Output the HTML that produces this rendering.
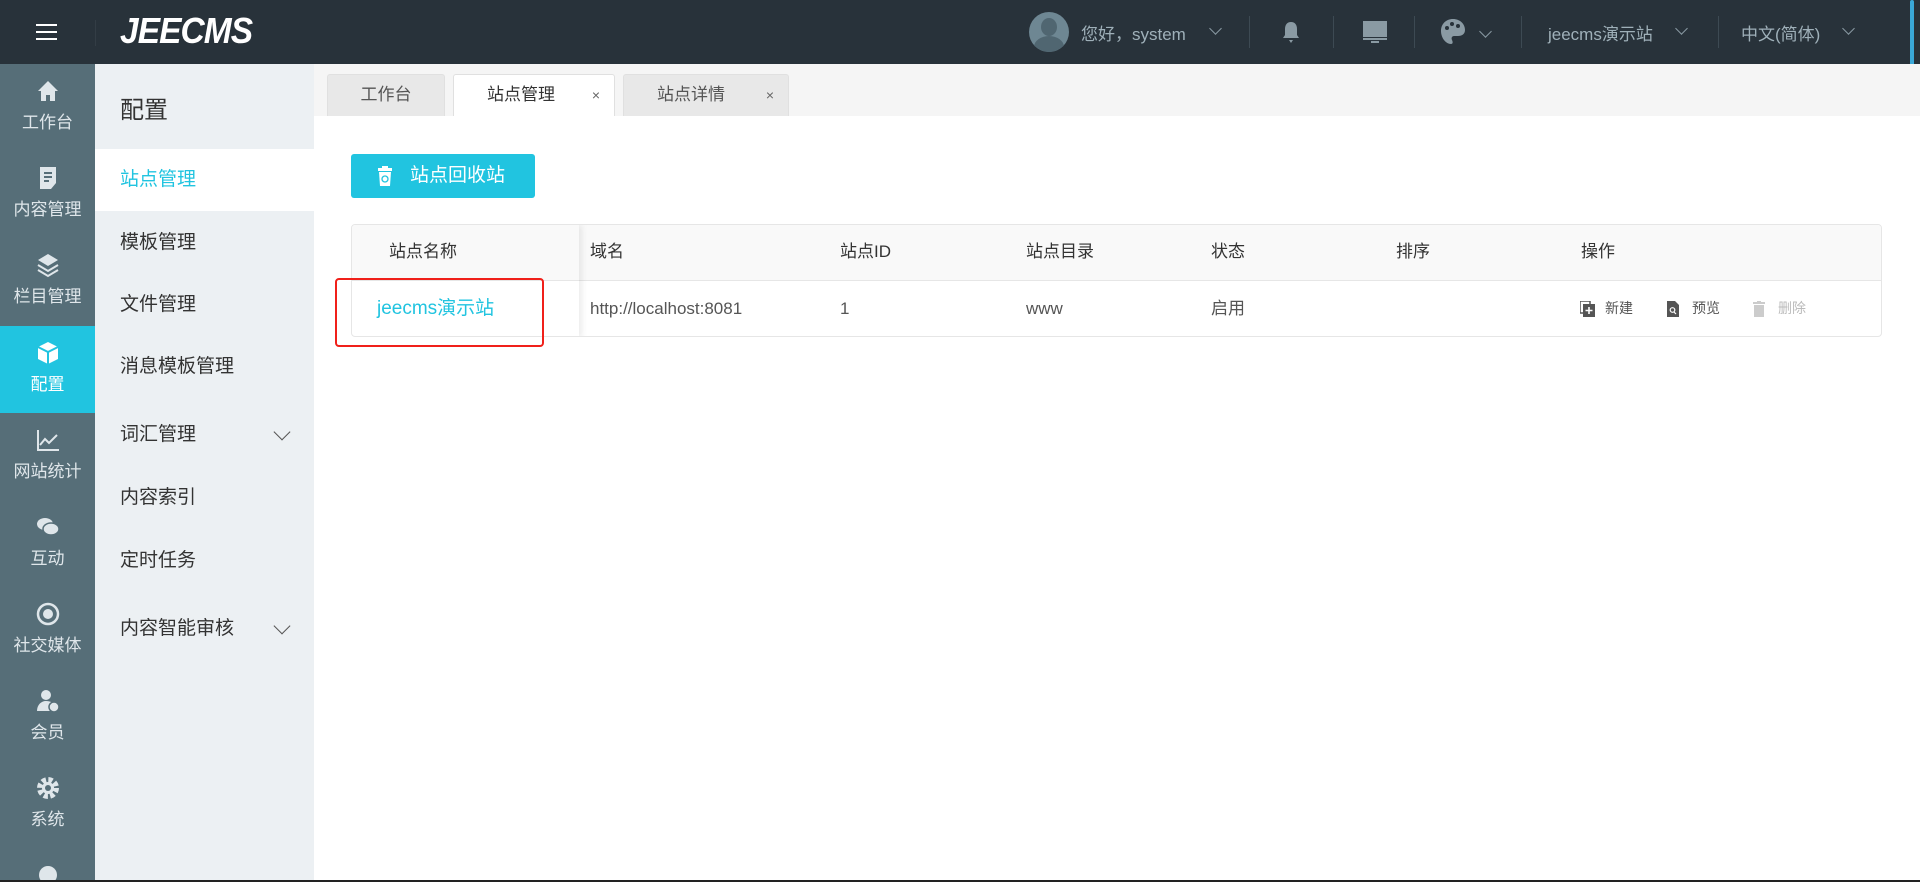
<!DOCTYPE html>
<html style="overflow:hidden;width:1920px;height:882px"><head><meta charset="utf-8"><style>
*{margin:0;padding:0;box-sizing:border-box}
body{width:1920px;height:882px;overflow:hidden;background:#fff;font-family:"Liberation Sans","Noto Sans CJK SC",sans-serif;position:relative}
.abs{position:absolute}
#hdr{left:0;top:0;width:1920px;height:64px;background:#28323a}
#nav{left:0;top:64px;width:95px;height:818px;background:#566e78;overflow:hidden}
.ni{position:absolute;left:0;width:95px;height:87px;color:#dfe6ea;text-align:center;font-size:17px}
.ni svg{display:block;margin:14px auto 4px;width:26px;height:26px}
.ni.act{background:#21c4e0;color:#fff}
#sub{left:95px;top:64px;width:219px;height:818px;background:#ecf0f3;overflow:hidden}
.si{position:absolute;left:0;width:219px;height:62px;line-height:62px;padding-left:25px;font-size:19px;color:#333}
.si.act{background:#fff;color:#21c4e0}
.chev{position:absolute;right:26px;top:22px;width:12px;height:12px;border-right:1.5px solid #555;border-bottom:1.5px solid #555;transform:rotate(45deg)}
.tab{position:absolute;top:74px;height:42px;line-height:40px;background:#e8e8e8;border:1px solid #e0e0e0;border-bottom:none;border-radius:3px 3px 0 0;font-size:17px;color:#555}
.tab .x{position:absolute;right:14px;top:0;font-size:14px;color:#666}
.th{position:absolute;top:224px;height:56px;line-height:56px;font-size:17px;color:#333}
.td{position:absolute;top:280px;height:57px;line-height:57px;font-size:17px;color:#555}
.hd{position:absolute;color:#9fb0b9;font-size:17px;top:20px}
.dv{position:absolute;top:16px;width:1px;height:32px;background:#3d4a53}
.hc{position:absolute;top:24px;width:9px;height:9px;border-right:1.5px solid #8a9aa3;border-bottom:1.5px solid #8a9aa3;transform:rotate(45deg)}
</style></head><body>
<div id="hdr" class="abs">
 <div class="abs" style="left:36px;top:24px;width:21px;height:2px;background:#fff;box-shadow:0 7px 0 #fff,0 14px 0 #fff"></div>
 <div class="abs" style="left:95px;top:20px;width:1px;height:26px;background:#333d45"></div>
 <div class="abs" style="left:120px;top:10px;color:#fff;font-size:36px;font-weight:bold;font-style:italic;letter-spacing:-1px;transform:scaleX(0.93);transform-origin:left">JEECMS</div>
 <div class="abs" style="left:1029px;top:12px;width:40px;height:40px;border-radius:50%;background:#6e8793;overflow:hidden"><div class="abs" style="left:12px;top:6px;width:16px;height:18px;border-radius:50%;background:#506671"></div><div class="abs" style="left:5px;top:24px;width:30px;height:22px;border-radius:50% 50% 0 0;background:#506671"></div></div>
 <div class="hd" style="left:1081px">您好，system</div><div class="hc" style="left:1211px"></div>
 <div class="dv" style="left:1249px"></div>
 <svg class="abs" style="left:1281px;top:20px" width="20" height="24" viewBox="0 0 20 24"><path d="M10 2c-4 0-6 3-6 7v6l-2 3h16l-2-3V9c0-4-2-7-6-7z M8 20h4l-2 3z" fill="#8a9aa3"/></svg>
 <div class="dv" style="left:1333px"></div>
 <svg class="abs" style="left:1362px;top:20px" width="26" height="24" viewBox="0 0 26 24"><rect x="1" y="1" width="24" height="16" fill="#8a9aa3"/><rect x="1" y="18" width="24" height="2" fill="#8a9aa3"/><rect x="9" y="21" width="8" height="2" fill="#8a9aa3"/></svg>
 <div class="dv" style="left:1414px"></div>
 <svg class="abs" style="left:1440px;top:18px" width="26" height="28" viewBox="0 0 26 28"><path d="M13 1C6 1 1 6 1 13c0 7 5 13 10 13 2 0 2-2 1-4-1-2 0-4 2-4h4c4 0 7-2 7-6 0-6-5-11-12-11z" fill="#8a9aa3"/><circle cx="7" cy="10" r="2" fill="#28323a"/><circle cx="12" cy="6" r="2" fill="#28323a"/><circle cx="18" cy="8" r="2" fill="#28323a"/></svg>
 <div class="hc" style="left:1481px;top:27px"></div>
 <div class="dv" style="left:1521px"></div>
 <div class="hd" style="left:1548px">jeecms演示站</div><div class="hc" style="left:1677px"></div>
 <div class="dv" style="left:1718px"></div>
 <div class="hd" style="left:1741px">中文(简体)</div><div class="hc" style="left:1844px"></div>
 <div class="abs" style="left:1910px;top:0;width:4px;height:68px;background:#3aa8d8;border-radius:2px"></div>
</div>
<div id="nav" class="abs">
 <div class="ni" style="top:0"><svg viewBox="0 0 26 26"><path d="M13 3L3 13h3v10h5v-6h4v6h5V13h3z" fill="#dfe6ea"/></svg>工作台</div>
 <div class="ni" style="top:87px"><svg viewBox="0 0 26 26"><path d="M5 2h16v16l-5 6H5z" fill="#dfe6ea"/><path d="M9 8h8M9 12h8M9 16h5" stroke="#566e78" stroke-width="2"/></svg>内容管理</div>
 <div class="ni" style="top:174px"><svg viewBox="0 0 26 26"><path d="M13 2l10 6-10 6-10-6z" fill="#dfe6ea"/><path d="M3 13l10 6 10-6M3 18l10 6 10-6" stroke="#dfe6ea" stroke-width="2" fill="none"/></svg>栏目管理</div>
 <div class="ni act" style="top:262px"><svg viewBox="0 0 26 26"><path d="M13 2l10 5v12l-10 5-10-5V7z" fill="#fff"/><path d="M3 7l10 5 10-5M13 12v12" stroke="#21c4e0" stroke-width="2" fill="none"/></svg>配置</div>
 <div class="ni" style="top:349px"><svg viewBox="0 0 26 26"><path d="M3 3v20h21M5 18l5-6 4 4 8-8" stroke="#dfe6ea" stroke-width="2" fill="none"/></svg>网站统计</div>
 <div class="ni" style="top:436px"><svg viewBox="0 0 26 26"><ellipse cx="10" cy="10" rx="8" ry="6" fill="#dfe6ea"/><ellipse cx="16" cy="15" rx="8" ry="6" fill="#dfe6ea" stroke="#566e78" stroke-width="1.5"/></svg>互动</div>
 <div class="ni" style="top:523px"><svg viewBox="0 0 26 26"><circle cx="13" cy="13" r="10" stroke="#dfe6ea" stroke-width="2.5" fill="none"/><circle cx="13" cy="13" r="5" fill="#dfe6ea"/></svg>社交媒体</div>
 <div class="ni" style="top:610px"><svg viewBox="0 0 26 26"><circle cx="11" cy="7" r="5" fill="#dfe6ea"/><path d="M2 23c0-6 4-10 9-10s7 2 8 4v6z" fill="#dfe6ea"/><circle cx="19" cy="19" r="5" fill="#dfe6ea" stroke="#566e78" stroke-width="1.5"/></svg>会员</div>
 <div class="ni" style="top:697px"><svg viewBox="0 0 26 26"><circle cx="13" cy="13" r="8" fill="none" stroke="#dfe6ea" stroke-width="6" stroke-dasharray="4 2.3"/><circle cx="13" cy="13" r="6" fill="#dfe6ea"/><circle cx="13" cy="13" r="3" fill="#566e78"/></svg>系统</div>
 <div class="ni" style="top:784px;height:34px"><svg viewBox="0 0 26 26"><circle cx="13" cy="13" r="9" fill="#dfe6ea"/></svg></div>
</div>
<div id="sub" class="abs">
 <div class="abs" style="left:25px;top:26px;font-size:24px;color:#333">配置</div>
 <div class="si act" style="top:85px">站点管理</div>
 <div class="si" style="top:148px">模板管理</div>
 <div class="si" style="top:210px">文件管理</div>
 <div class="si" style="top:272px">消息模板管理</div>
 <div class="si" style="top:340px">词汇管理<span class="chev"></span></div>
 <div class="si" style="top:403px">内容索引</div>
 <div class="si" style="top:466px">定时任务</div>
 <div class="si" style="top:534px">内容智能审核<span class="chev"></span></div>
</div>
<div class="abs" style="left:314px;top:64px;width:1606px;height:52px;background:#f5f5f5"></div>
<div class="tab" style="left:327px;width:118px;text-align:center">工作台</div>
<div class="tab" style="left:453px;width:162px;background:#fff;color:#333;padding-left:33px">站点管理<span class="x">×</span></div>
<div class="tab" style="left:623px;width:166px;padding-left:33px">站点详情<span class="x">×</span></div>
<div class="abs" style="left:351px;top:154px;width:184px;height:44px;background:#21c4e0;border-radius:3px;color:#fff;font-size:19px;line-height:44px;padding-left:59px">站点回收站</div>
<svg class="abs" style="left:378px;top:166px" width="14" height="20" viewBox="0 0 14 20"><rect x="4" y="0" width="6" height="2" fill="#fff"/><rect x="0" y="2" width="14" height="3" fill="#fff"/><path d="M1 6h12l-1 14H2z" fill="#fff"/><circle cx="7" cy="13" r="3" stroke="#21c4e0" stroke-width="1.3" fill="none"/></svg>
<div class="abs" style="left:351px;top:224px;width:1531px;height:113px;border:1px solid #e6e6e6;border-radius:4px;overflow:hidden">
 <div class="abs" style="left:0;top:0;width:1531px;height:56px;background:#f9f9f9;border-bottom:1px solid #e6e6e6"></div>
 <div class="abs" style="left:0;top:0;width:227px;height:113px;box-shadow:3px 0 6px rgba(0,0,0,0.08);background:transparent"></div>
</div>
<div class="th" style="left:389px">站点名称</div>
<div class="th" style="left:590px">域名</div>
<div class="th" style="left:840px">站点ID</div>
<div class="th" style="left:1026px">站点目录</div>
<div class="th" style="left:1211px">状态</div>
<div class="th" style="left:1396px">排序</div>
<div class="th" style="left:1581px">操作</div>
<div class="td" style="left:377px;color:#21c4e0;font-size:19px">jeecms演示站</div>
<div class="td" style="left:590px">http://localhost:8081</div>
<div class="td" style="left:840px">1</div>
<div class="td" style="left:1026px">www</div>
<div class="td" style="left:1211px">启用</div>
<svg class="abs" style="left:1580px;top:301px" width="15" height="16" viewBox="0 0 15 16"><rect x="0" y="0" width="10" height="12" fill="none" stroke="#555" stroke-width="1.5"/><rect x="3" y="3" width="12" height="13" fill="#555"/><path d="M9 6v7M5.5 9.5h7" stroke="#fff" stroke-width="1.6"/></svg>
<div class="td" style="left:1605px;font-size:14px">新建</div>
<svg class="abs" style="left:1667px;top:301px" width="12" height="16" viewBox="0 0 12 16"><path d="M0 0h8l4 4v12H0z" fill="#555"/><circle cx="5.5" cy="9" r="2.3" stroke="#fff" stroke-width="1.2" fill="none"/><path d="M7 11l2 2" stroke="#fff" stroke-width="1.2"/></svg>
<div class="td" style="left:1692px;font-size:14px">预览</div>
<svg class="abs" style="left:1753px;top:301px" width="12" height="16" viewBox="0 0 12 16"><rect x="0" y="1" width="12" height="2" fill="#ccc"/><rect x="4" y="0" width="4" height="2" fill="#ccc"/><path d="M1 4h10v12H1z" fill="#ccc"/></svg>
<div class="td" style="left:1778px;font-size:14px;color:#bbb">删除</div>
<div class="abs" style="left:335px;top:278px;width:209px;height:69px;border:2.5px solid #f0201a;border-radius:4px"></div>
<div class="abs" style="left:0;top:880px;width:1920px;height:2px;background:#222"></div>
</body></html>
